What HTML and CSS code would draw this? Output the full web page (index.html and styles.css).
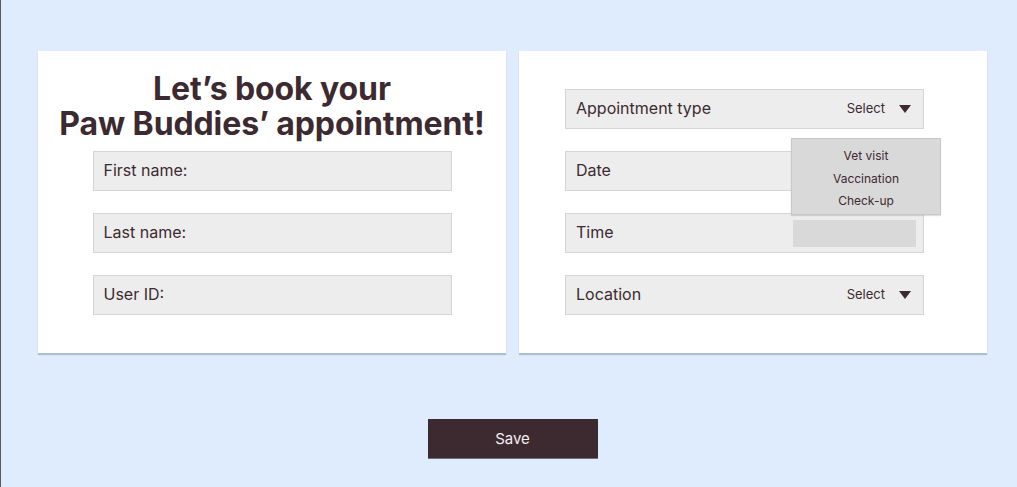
FILE: index.html
```html
<!DOCTYPE html>
<html>
<head>
<meta charset="utf-8">
<link rel="stylesheet" href="styles.css">
</head>
<body>
<div class="page">
  <div class="cards">
    <section class="card card-left">
      <h1 class="title"><span class="line">Let’s book your</span><span class="line">Paw Buddies’ appointment!</span></h1>
      <div class="fields">
        <div class="field"><span class="label">First name:</span></div>
        <div class="field"><span class="label">Last name:</span></div>
        <div class="field"><span class="label">User ID:</span></div>
      </div>
    </section>
    <section class="card card-right">
      <div class="fields">
        <div class="field">
          <span class="label">Appointment type</span>
          <span class="select">Select <span class="caret"></span></span>
        </div>
        <div class="field">
          <span class="label">Date</span>
        </div>
        <div class="field">
          <span class="label">Time</span>
          <span class="time-box"></span>
        </div>
        <div class="field">
          <span class="label">Location</span>
          <span class="select">Select <span class="caret"></span></span>
        </div>
      </div>
      <ul class="menu">
        <li>Vet visit</li>
        <li>Vaccination</li>
        <li>Check-up</li>
      </ul>
    </section>
  </div>
  <div class="actions">
    <button class="save">Save</button>
  </div>
</div>
</body>
</html>
```
FILE: styles.css
```css
* { box-sizing: border-box; }
html, body { margin: 0; padding: 0; }
body {
  width: 1017px;
  height: 487px;
  background: #dfecfd;
  font-family: Inter, "Noto Sans", sans-serif;
  color: #3c2a30;
  border-left: 1px solid #5a5a5a;
  overflow: hidden;
}
.page {
  padding-top: 51px;
}
.cards {
  display: flex;
  gap: 13px;
  margin-left: 37px;
}
.card {
  position: relative;
  width: 468px;
  height: 302px;
  background: #fff;
  box-shadow: 0 2px 1px rgba(120, 135, 160, 0.45);
}
.card-left {
  padding-top: 20px;
  display: flex;
  flex-direction: column;
  align-items: center;
}
.title {
  margin: 0;
  font-size: 32px;
  font-weight: 700;
  line-height: 35px;
  text-align: center;
  letter-spacing: -0.1px;
  display: flex;
  flex-direction: column;
  align-items: center;
}
.line {
  display: block;
  height: 35px;
}
.card-left .fields { margin-top: 10px; }
.card-right .fields { margin: 38px 0 0 46px; }
.fields {
  display: flex;
  flex-direction: column;
  gap: 22px;
}
.field {
  width: 359px;
  height: 40px;
  background: #ededed;
  border: 1px solid #d5d5d5;
  display: flex;
  align-items: center;
  justify-content: space-between;
  padding: 0 12px 3px 10px;
}
.label {
  font-size: 16px;
}
.select {
  display: flex;
  align-items: center;
  font-size: 13px;
  gap: 14px;
}
.caret {
  width: 0;
  height: 0;
  border-left: 6.5px solid transparent;
  border-right: 6.5px solid transparent;
  border-top: 8px solid #3c2a30;
  margin-top: 2px;
}
.time-box {
  width: 123px;
  height: 27px;
  background: #d9d9d9;
  margin-right: -5px;
  margin-top: 3px;
}
.menu {
  position: absolute;
  left: 272px;
  top: 87px;
  width: 150px;
  height: 77px;
  margin: 0;
  padding: 6px 0 0;
  list-style: none;
  background: #d9d9d9;
  border: 1px solid #c8c8c8;
  box-shadow: 0 1px 1px rgba(0,0,0,0.12);
  font-size: 12px;
  text-align: center;
  line-height: 22.5px;
}
.actions {
  display: flex;
  justify-content: center;
  padding-top: 66px;
  padding-left: 7px;
}
.save {
  width: 170px;
  height: 40px;
  background: #3c2a30;
  color: #f3eef0;
  border: none;
  border-bottom: 1px solid #6b6f80;
  font-family: Inter, "Noto Sans", sans-serif;
  font-size: 15px;
  padding: 0;
}
```
